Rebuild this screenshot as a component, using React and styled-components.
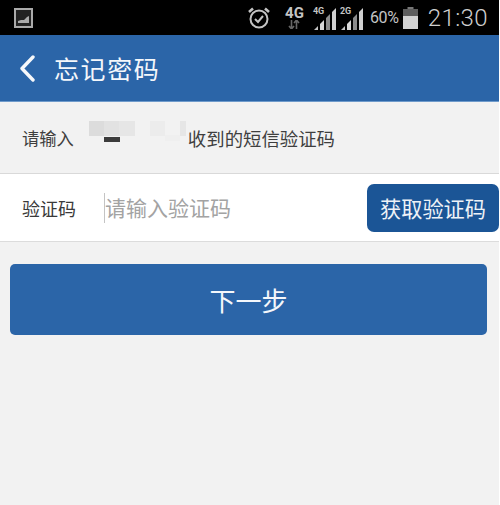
import React from "react";
import styled, { createGlobalStyle } from "styled-components";

const Global = createGlobalStyle`
  html, body {
    margin: 0;
    padding: 0;
    background: #fff;
  }
  * {
    box-sizing: border-box;
  }
`;

const Page = styled.div`
  width: 499px;
  height: 505px;
  overflow: hidden;
  background: #f2f2f2;
  font-family: "Noto Sans CJK SC", "Roboto", sans-serif;
`;

const StatusBar = styled.div`
  height: 35px;
  background: #000;
  display: flex;
  align-items: center;
  justify-content: space-between;
  padding: 0 11px 0 14px;
  color: #c4c4c4;
`;

const StatusRight = styled.div`
  display: flex;
  align-items: center;
`;

const Percent = styled.span`
  font-family: "Roboto", sans-serif;
  font-size: 16px;
  margin-left: 5px;
  margin-right: 4px;
  letter-spacing: -0.3px;
`;

const Clock = styled.span`
  font-family: "Roboto", sans-serif;
  font-size: 24px;
  font-weight: 300;
  margin-left: 10px;
  letter-spacing: 0.4px;
  color: #cfcfcf;
`;

const NetWrap = styled.div`
  display: flex;
  flex-direction: column;
  align-items: center;
  margin-left: 14px;
  font-family: "Roboto", sans-serif;
  font-size: 15px;
  font-weight: 700;
  line-height: 14px;
`;

const SignalWrap = styled.div`
  position: relative;
  width: 25px;
  height: 24px;
  margin-left: ${(p) => p.$gap}px;
`;

const SignalTag = styled.span`
  position: absolute;
  left: 0;
  top: 1px;
  font-family: "Roboto", sans-serif;
  font-size: 9px;
  font-weight: 700;
  line-height: 9px;
`;

const Header = styled.header`
  height: 67px;
  background: #2b65a8;
  border-bottom: 1px solid #6f9bcb;
  display: flex;
  align-items: center;
  padding: 0 0 0 19px;
  gap: 18px;
`;

const Title = styled.h1`
  margin: 0;
  font-size: 25px;
  font-weight: 400;
  color: #f4f7fb;
  letter-spacing: 1.6px;
`;

const InfoRow = styled.div`
  height: 72px;
  display: flex;
  align-items: center;
  padding-left: 22px;
  font-size: 17.3px;
  color: #3f3f3f;
  border-bottom: 1px solid #d9d9d9;
`;

const InfoTail = styled.span`
  font-size: 18.4px;
`;

const Masked = styled.div`
  position: relative;
  width: 99px;
  height: 24px;
  margin: -10px 0 0 15px;
  flex-shrink: 0;
`;

const MaskBlock = styled.span`
  position: absolute;
  left: ${(p) => p.$x}px;
  top: ${(p) => p.$y}px;
  width: ${(p) => p.$w}px;
  height: ${(p) => p.$h}px;
  background: ${(p) => p.$c};
`;

const CodeRow = styled.div`
  height: 68px;
  background: #fff;
  border-bottom: 1px solid #dcdcdc;
  display: flex;
  align-items: center;
  padding-left: 22px;
`;

const CodeLabel = styled.span`
  width: 82px;
  font-size: 18px;
  color: #3a3a3a;
`;

const CodeInput = styled.div`
  flex: 1;
  height: 30px;
  border-left: 1px solid #c4c4c4;
  font-size: 21px;
  line-height: 28px;
  color: #a3a3a3;
  white-space: nowrap;
`;

const SendButton = styled.button`
  width: 132px;
  height: 48px;
  border: none;
  border-radius: 7px;
  background: #1b5596;
  color: #eef2f7;
  font-family: inherit;
  font-size: 21.2px;
  padding: 0;
  white-space: nowrap;
`;

const Body = styled.div`
  padding: 22px 12px 0 10px;
`;

const NextButton = styled.button`
  width: 100%;
  height: 71px;
  border: none;
  border-radius: 5px;
  background: #2b65a8;
  color: #f4f7fb;
  font-family: inherit;
  font-size: 26px;
  padding: 0;
`;

function GalleryIcon() {
  return (
    <svg width="20" height="20" viewBox="0 0 20 20">
      <rect x="1" y="1" width="17" height="18" fill="#222" stroke="#aaa" strokeWidth="2" />
      <path d="M4 15 L4 13 L7 12 L10 12 L13 9 L15 8 L15 15 Z" fill="#aaa" />
    </svg>
  );
}

function AlarmIcon() {
  return (
    <svg width="24" height="24" viewBox="0 0 24 24" fill="none" stroke="#c4c4c4" strokeWidth="2">
      <circle cx="12" cy="13" r="8.5" />
      <path d="M8 13 L11 16 L16 10" />
      <path d="M2 6 L6 2.5 M22 6 L18 2.5" strokeWidth="2.6" />
    </svg>
  );
}

function SignalIcon() {
  return (
    <svg width="25" height="24" viewBox="0 0 25 24" fill="#c4c4c4">
      <path d="M1 24 L5 20 L5 24 Z" />
      <path d="M7 24 L7 18 L11 14 L11 24 Z" fill="#d8d8d8" />
      <path d="M13 24 L13 12 L17 8 L17 24 Z" fill="#8c8c8c" />
      <path d="M19 24 L19 6 L23 2 L23 24 Z" fill="#d0d0d0" />
    </svg>
  );
}

function Arrows() {
  return (
    <svg width="12" height="9" viewBox="0 0 12 9" fill="none" stroke="#666" strokeWidth="1.6">
      <path d="M3.5 0 L3.5 9 M1 6 L3.5 9 L6 6" />
      <path d="M8.5 9 L8.5 0 M6 3 L8.5 0 L11 3" />
    </svg>
  );
}

function BatteryIcon() {
  return (
    <svg width="15" height="22" viewBox="0 0 15 22">
      <rect x="4.5" y="0" width="6" height="2" fill="#777" />
      <rect x="0" y="2" width="15" height="20" fill="#5e5e5e" />
      <rect x="0" y="9" width="15" height="13" fill="#d2d2d2" />
    </svg>
  );
}

function BackIcon() {
  return (
    <svg width="17" height="27" viewBox="0 0 17 27" fill="none" stroke="#f6f8fb" strokeWidth="3.4" strokeLinecap="round" strokeLinejoin="round">
      <path d="M14 2 L3 13.5 L14 25" />
    </svg>
  );
}

const maskBlocks = [
  { x: 0, y: 0, w: 15, h: 15, c: "#dcdcdc" },
  { x: 15, y: 0, w: 15, h: 15, c: "#e2e2e2" },
  { x: 30, y: 0, w: 16, h: 15, c: "#e6e6e6" },
  { x: 15, y: 16, w: 16, h: 5, c: "#3c3c3c" },
  { x: 61, y: 0, w: 15, h: 15, c: "#ececec" },
  { x: 76, y: 14, w: 15, h: 6, c: "#efefef" },
  { x: 91, y: 0, w: 6, h: 15, c: "#e6e6e6" },
];

export default function App() {
  return (
    <Page>
      <Global />
      <StatusBar>
        <GalleryIcon />
        <StatusRight>
          <AlarmIcon />
          <NetWrap>
            4G
            <Arrows />
          </NetWrap>
          <SignalWrap $gap={9}>
            <SignalTag>4G</SignalTag>
            <SignalIcon />
          </SignalWrap>
          <SignalWrap $gap={2}>
            <SignalTag>2G</SignalTag>
            <SignalIcon />
          </SignalWrap>
          <Percent>60%</Percent>
          <BatteryIcon />
          <Clock>21:30</Clock>
        </StatusRight>
      </StatusBar>
      <Header>
        <BackIcon />
        <Title>忘记密码</Title>
      </Header>
      <InfoRow>
        请输入
        <Masked>
          {maskBlocks.map((b, i) => (
            <MaskBlock key={i} $x={b.x} $y={b.y} $w={b.w} $h={b.h} $c={b.c} />
          ))}
        </Masked>
        <InfoTail>收到的短信验证码</InfoTail>
      </InfoRow>
      <CodeRow>
        <CodeLabel>验证码</CodeLabel>
        <CodeInput>请输入验证码</CodeInput>
        <SendButton>获取验证码</SendButton>
      </CodeRow>
      <Body>
        <NextButton>下一步</NextButton>
      </Body>
    </Page>
  );
}
